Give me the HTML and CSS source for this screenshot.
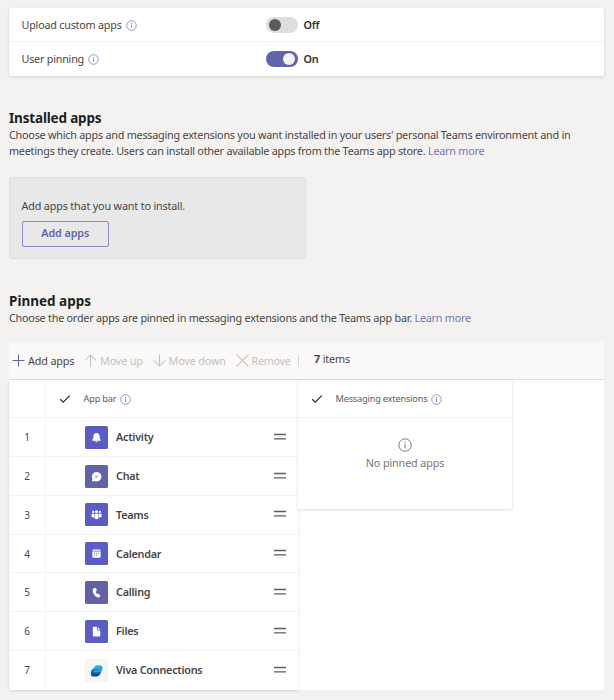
FILE: index.html
```html
<!DOCTYPE html>
<html lang="en">
<head>
<meta charset="utf-8">
<title>App setup policy</title>
<link rel="stylesheet" href="styles.css">
</head>
<body>
<svg class="defs" width="0" height="0" aria-hidden="true">
  <symbol id="info" viewBox="0 0 12 12"><circle cx="6" cy="6" r="5.200" fill="none" stroke="currentColor" stroke-width="1"/><path d="M6 5.200v3.400M6 3.200v1.100" stroke="currentColor" stroke-width="1.100"/></symbol>
  <symbol id="check" viewBox="0 0 12 10"><path d="M1.200 5.200l3 3L10.800 1.600" fill="none" stroke="currentColor" stroke-width="1.300"/></symbol>
  <symbol id="grip" viewBox="0 0 12 8"><path d="M0 1.500h12M0 5.800h12" stroke="currentColor" stroke-width="1.300"/></symbol>
</svg>
<main class="page">
  <section class="card">
    <div class="setting">
      <div class="setting-name"><span>Upload custom apps</span><svg class="info"><use href="#info"/></svg></div>
      <span class="toggle"></span><b class="state">Off</b>
    </div>
    <div class="setting">
      <div class="setting-name"><span>User pinning</span><svg class="info"><use href="#info"/></svg></div>
      <span class="toggle on"></span><b class="state">On</b>
    </div>
  </section>

  <section class="installed">
    <h2>Installed apps</h2>
    <p><span>Choose which apps and messaging extensions you want installed in your users' personal Teams environment and in</span><br><span>meetings they create. Users can install other available apps from the Teams app store. <a>Learn more</a></span></p>
    <div class="empty-box">
      <span class="want">Add apps that you want to install.</span>
      <button>Add apps</button>
    </div>
  </section>

  <section class="pinned">
    <h2 class="wide">Pinned apps</h2>
    <p><span>Choose the order apps are pinned in messaging extensions and the Teams app bar. <a>Learn more</a></span></p>
    <div class="toolbar">
      <div class="tool add"><svg viewBox="0 0 14 14"><path d="M7 .5v13M.5 7h13"/></svg><span>Add apps</span></div>
      <div class="tool up"><svg viewBox="0 0 14 14"><path d="M7 13.500V1M1 7l6-6 6 6"/></svg><span>Move up</span></div>
      <div class="tool down"><svg viewBox="0 0 14 14"><path d="M7 .5V13M1 7l6 6 6-6"/></svg><span>Move down</span></div>
      <div class="tool remove"><svg viewBox="0 0 14 14"><path d="M.5.5l13 13M13.500.5l-13 13"/></svg><span>Remove</span></div>
      <i class="sep"></i>
      <span class="count"><b>7</b> items</span>
    </div>
    <div class="board">
      <div class="list">
        <div class="row head"><div class="num"></div><div class="cell"><svg class="check"><use href="#check"/></svg><span class="caption">App bar</span><svg class="info small"><use href="#info"/></svg></div></div>
        <div class="row"><div class="num">1</div><div class="cell"><svg class="app" viewBox="0 0 22 22"><rect width="22" height="22" rx="1.500" fill="#5b5dc7"/><path d="M11 6.600c-1.900 0-3 1.400-3 3.100v1.800l-1 1.800v.7h8v-.7l-1-1.800V9.700c0-1.700-1.100-3.100-3-3.100zM9.700 14.500h2.600a1.300 1.100 0 0 1-2.600 0z" fill="#fff"/></svg><b>Activity</b><svg class="grip"><use href="#grip"/></svg></div></div>
        <div class="row"><div class="num">2</div><div class="cell"><svg class="app" viewBox="0 0 22 22"><rect width="22" height="22" rx="1.500" fill="#6163a6"/><path d="M11.200 6.700a4.500 4.500 0 1 1-2 8.500l-2.600.7.600-2.500a4.500 4.500 0 0 1 4-6.700z" fill="#fff"/><path d="M9.700 10.500h3M9.700 11.900h1.800" stroke="#8587c0" stroke-width=".8"/></svg><b>Chat</b><svg class="grip"><use href="#grip"/></svg></div></div>
        <div class="row"><div class="num">3</div><div class="cell"><svg class="app" viewBox="0 0 22 22"><rect width="22" height="22" rx="1.500" fill="#5b5dc7"/><g fill="#fff"><circle cx="11" cy="8.300" r="1.400"/><circle cx="7.800" cy="8.600" r="1.100"/><circle cx="14.200" cy="8.600" r="1.100"/><path d="M9.100 10.300h3.800V14a1.900 1.600 0 0 1-3.800 0zM6.200 10.300h2.500v3.600c-1.500.2-2.500-.4-2.500-1.500zM13.300 10.300h2.500v2.100c0 1.100-1 1.700-2.500 1.500z"/></g></svg><b>Teams</b><svg class="grip"><use href="#grip"/></svg></div></div>
        <div class="row"><div class="num">4</div><div class="cell"><svg class="app" viewBox="0 0 22 22"><rect width="22" height="22" rx="1.500" fill="#5b5dc7"/><path d="M7 8.400c0-.8.500-1.200 1.200-1.200h5.600c.7 0 1.200.4 1.200 1.200zM7 9.100h8v4.700c0 .8-.5 1.200-1.200 1.200H8.200c-.7 0-1.200-.4-1.200-1.200z" fill="#fff"/><path d="M8.600 10.900h5M8.600 12.900h3.600" stroke="#8a8bd8" stroke-width="1" stroke-dasharray="1 1"/></svg><b>Calendar</b><svg class="grip"><use href="#grip"/></svg></div></div>
        <div class="row"><div class="num">5</div><div class="cell"><svg class="app" viewBox="0 0 22 22"><rect width="22" height="22" rx="1.500" fill="#6163a6"/><path d="M8.200 7l1.700-.4c.4 0 .6.200.8.600l.5 1.500c.1.400 0 .7-.3.900l-.8.700c.3 1 .8 1.700 1.600 2.300l1-.3c.3-.1.600 0 .8.300l1 1.300c.2.300.2.700-.1 1-.7.800-1.500 1.100-2.600.7C9.200 14.600 7.400 11.800 7.400 8.500c0-.7.300-1.200.8-1.500z" fill="#fff"/></svg><b>Calling</b><svg class="grip"><use href="#grip"/></svg></div></div>
        <div class="row"><div class="num">6</div><div class="cell"><svg class="app" viewBox="0 0 22 22"><rect width="22" height="22" rx="1.500" fill="#5b5dc7"/><path d="M8.400 6.500h3v3c0 .4.200.6.600.6h2.600v4.800c0 .6-.3.900-.9.900H8.400c-.6 0-.9-.3-.9-.9V7.400c0-.6.300-.9.900-.9zM12.100 6.700l2.400 2.600h-2.400z" fill="#fff"/></svg><b>Files</b><svg class="grip"><use href="#grip"/></svg></div></div>
        <div class="row"><div class="num">7</div><div class="cell"><svg class="app" viewBox="0 0 22 22"><defs><linearGradient id="va" x1="0" y1="0" x2="1" y2="1"><stop offset="0" stop-color="#35c1ee"/><stop offset="1" stop-color="#1a8fd6"/></linearGradient><linearGradient id="vb" x1="0" y1="0" x2="0" y2="1"><stop offset="0" stop-color="#1c86d4"/><stop offset="1" stop-color="#0a3f86"/></linearGradient></defs><rect x=".25" y=".25" width="21.500" height="21.500" rx="1.500" fill="#f7f6f6" stroke="#ecebf2" stroke-width=".5"/><path d="M9.500 8.800h4c1.700 0 2.300.8 2.100 2.300-.4 3.400-2 5.700-4.600 5.700H8.500c-2.300 0-3.100-1.300-2.900-3.500.2-2.600 1.600-4.500 3.900-4.500z" fill="url(#vb)"/><path d="M12.400 6h1.700c2.200 0 3 1.200 2.700 3.100-.4 2.600-1.900 3.900-4.100 3.900h-2.400c-1.300 0-1.900-.5-1.700-1.300.1-.7.700-1 1.400-1h2.500c.8 0 .9-1.200.1-1.200H9.900c-1 0-1.700.2-2.300.7C8.100 7.600 9.900 6 12.400 6z" fill="url(#va)"/></svg><b>Viva Connections</b><svg class="grip"><use href="#grip"/></svg></div></div>
      </div>
      <div class="messaging">
        <div class="mhead"><svg class="check"><use href="#check"/></svg><span class="caption">Messaging extensions</span><svg class="info small"><use href="#info"/></svg></div>
        <div class="none"><svg class="bigi" viewBox="0 0 14 14"><circle cx="7" cy="7" r="6.200"/><path d="M7 6v4.300M7 3.700v1.200"/></svg><span>No pinned apps</span></div>
      </div>
    </div>
  </section>
</main>
</body>
</html>
```
FILE: styles.css
```css
* { box-sizing: border-box; }
body { margin: 0; background: #f3f2f1; color: #484644; font: 10.8px/16px "Noto Sans", "Open Sans", sans-serif; letter-spacing: -.23px; }
.defs { position: absolute; }
span, b, h2, a { white-space: nowrap; }
svg { flex: none; }
.page { width: 614px; height: 700px; padding: 8px 10px 0 9px; overflow: hidden; }
.card { height: 68px; background: #fff; border-radius: 2px; box-shadow: 0 1px 3px rgba(0,0,0,.14); }
.setting { display: flex; align-items: center; height: 34px; padding-left: 12.5px; }
.setting:first-child { height: 33px; padding-top: 1px; }
.setting + .setting { border-top: 1px solid #f3f2f1; }
.setting-name { display: flex; align-items: center; gap: 4px; width: 244.5px; }
.info { width: 11px; height: 11px; margin-top: 1px; color: #8b8cc7; }
.toggle { width: 32px; height: 16px; border-radius: 8px; background: #dedede; padding: 2px 3px; display: flex; }
.toggle::after { content: ""; width: 12px; height: 12px; border-radius: 50%; background: #5c5a58; }
.toggle.on { background: #6264a7; justify-content: flex-end; }
.toggle.on::after { background: #f3f2f1; }
.state { margin-left: 5.5px; font-weight: 600; color: #323130; letter-spacing: -.2px; }
h2 { margin: 0; font-size: 13.5px; line-height: 18px; font-weight: 700; color: #201f1e; letter-spacing: -.17px; }
h2.wide { letter-spacing: 0; }
p { margin: 0; }
a { color: #7476b5; }
.installed { padding-top: 33px; }
.empty-box { width: 297px; height: 82px; margin-top: 18px; padding: 20px 11.5px 0; display: flex; flex-direction: column; align-items: flex-start; background: #e8e8e8; border: 1px solid #e1dfdd; border-radius: 3px; }
.want { letter-spacing: -.17px; }
button { flex: none; width: 87.5px; height: 26px; margin-top: 7px; padding: 0 0 3px; background: none; border: 1px solid #8b8cc7; border-radius: 2px; font: 600 10.8px/16px "Noto Sans", sans-serif; letter-spacing: -.09px; color: #6264a7; }
.pinned { padding-top: 33px; }
.toolbar { display: flex; align-items: center; height: 37px; margin-top: 16px; padding-left: 3px; background: #faf9f8; letter-spacing: -.14px; }
.tool { flex: none; display: flex; align-items: center; gap: 3px; color: #c2c0be; }
.tool svg { width: 13px; height: 13px; fill: none; stroke: #c2c0be; stroke-width: 1.1; }
.add { width: 72px; color: #484644; }
.add svg { stroke: #6264a7; }
.up { width: 68.5px; }
.down { width: 83px; }
.remove { width: 62px; letter-spacing: -.3px; }
.sep { width: 1px; height: 11px; background: #d6d4d2; }
.count { margin: 0 0 3px 15.5px; }
.board { display: flex; align-items: flex-start; height: 311px; background: #fff; border-top: 1px solid #e1dfdd; }
.list { width: 289px; height: 310px; display: grid; grid-template-rows: 38.4px repeat(7, 38.75px); box-shadow: 0 1px 3px rgba(0,0,0,.14); }
.row { display: flex; border-bottom: 1px solid #f5f4f3; }
.row:last-child { border: 0; }
.num { width: 37px; display: flex; align-items: center; justify-content: center; border-right: 1px solid #f5f4f3; font-size: 10px; }
.cell { flex: 1; display: flex; align-items: center; padding-left: 39px; }
.head .cell { padding-left: 13px; }
.check { width: 12px; height: 10px; color: #323130; margin-right: 12.5px; }
.app { width: 23px; height: 23px; margin-right: 8px; }
.row b { font-weight: 600; color: #484644; letter-spacing: -.24px; }
.grip { width: 12px; height: 8px; margin: 0 12px 1px auto; color: #605e5c; }
.info.small { margin-left: 4px; }
.messaging { width: 214px; height: 129px; background: #fff; box-shadow: 0 1px 3px rgba(0,0,0,.14); }
.mhead { height: 38.4px; display: flex; align-items: center; padding-left: 13px; border-bottom: 1px solid #f5f4f3; }
.caption { font-size: 9.2px; letter-spacing: -.19px; color: #605e5c; }
.none { display: flex; flex-direction: column; align-items: center; padding-top: 20px; gap: 3px; color: #797775; letter-spacing: -.14px; }
.bigi { width: 14px; height: 14px; fill: none; stroke: #797775; }
```
